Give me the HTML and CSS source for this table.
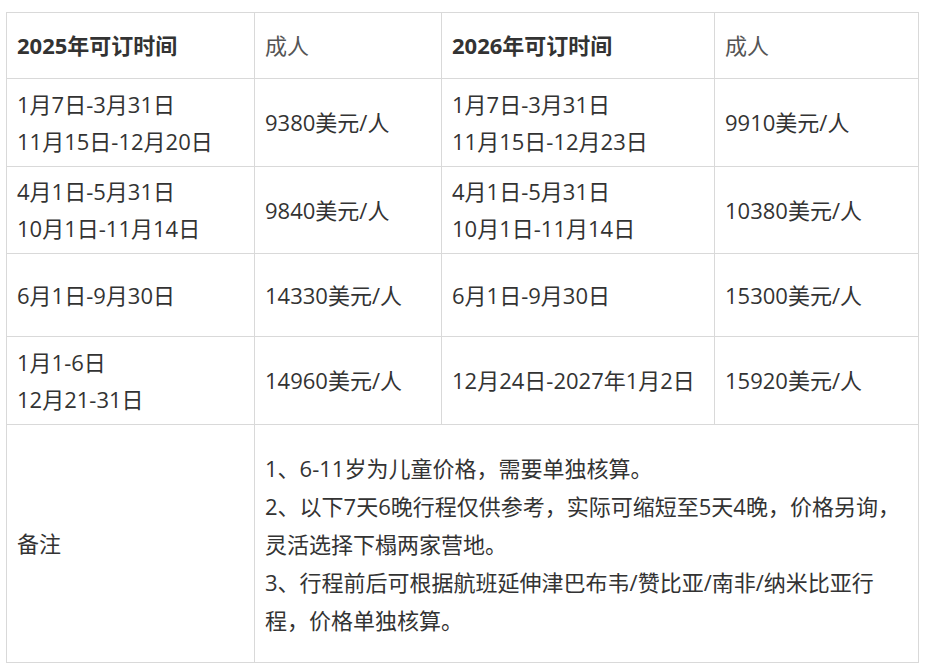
FILE: index.html
```html
<!DOCTYPE html>
<html lang="zh-CN">
<head>
<meta charset="utf-8">
<title>价格表</title>
<link rel="stylesheet" href="styles.css">
</head>
<body>
<table class="price-table">
  <colgroup>
    <col class="c1"><col class="c2"><col class="c3"><col class="c4">
  </colgroup>
  <tr class="r-head">
    <td class="th">2025年可订时间</td>
    <td class="sub">成人</td>
    <td class="th">2026年可订时间</td>
    <td class="sub">成人</td>
  </tr>
  <tr class="r-1">
    <td>1月7日-3月31日<br>11月15日-12月20日</td>
    <td>9380美元/人</td>
    <td>1月7日-3月31日<br>11月15日-12月23日</td>
    <td>9910美元/人</td>
  </tr>
  <tr class="r-2">
    <td>4月1日-5月31日<br>10月1日-11月14日</td>
    <td>9840美元/人</td>
    <td>4月1日-5月31日<br>10月1日-11月14日</td>
    <td>10380美元/人</td>
  </tr>
  <tr class="r-3">
    <td>6月1日-9月30日</td>
    <td>14330美元/人</td>
    <td>6月1日-9月30日</td>
    <td>15300美元/人</td>
  </tr>
  <tr class="r-4">
    <td>1月1-6日<br>12月21-31日</td>
    <td>14960美元/人</td>
    <td>12月24日-2027年1月2日</td>
    <td>15920美元/人</td>
  </tr>
  <tr class="r-note">
    <td>备注</td>
    <td colspan="3" class="notes">1、6-11岁为儿童价格，需要单独核算。<br>2、以下7天6晚行程仅供参考，实际可缩短至5天4晚，价格另询，灵活选择下榻两家营地。<br>3、行程前后可根据航班延伸津巴布韦/赞比亚/南非/纳米比亚行程，价格单独核算。</td>
  </tr>
</table>
</body>
</html>
```
FILE: styles.css
```css
html, body {
  margin: 0;
  padding: 0;
  background: #ffffff;
}

body {
  font-family: "Open Sans", "Noto Sans CJK SC", sans-serif;
  font-size: 22px;
  color: #333333;
}

.price-table {
  margin: 12px 0 0 6px;
  border-collapse: collapse;
  table-layout: fixed;
  width: 912px;
}

.c1 { width: 248px; }
.c2 { width: 187px; }
.c3 { width: 273px; }
.c4 { width: 204px; }

.price-table td {
  border: 1px solid #d9d9d9;
  padding: 0 10px;
  line-height: 37px;
  vertical-align: middle;
  text-align: left;
}

.price-table .th {
  font-weight: 700;
  color: #333333;
}

.price-table .sub {
  color: #555555;
}

.r-head { height: 66px; }
.r-1 { height: 88px; }
.r-2 { height: 87px; }
.r-3 { height: 83px; }
.r-4 { height: 88px; }
.r-note { height: 238px; }

.price-table .notes {
  line-height: 38px;
}
```
